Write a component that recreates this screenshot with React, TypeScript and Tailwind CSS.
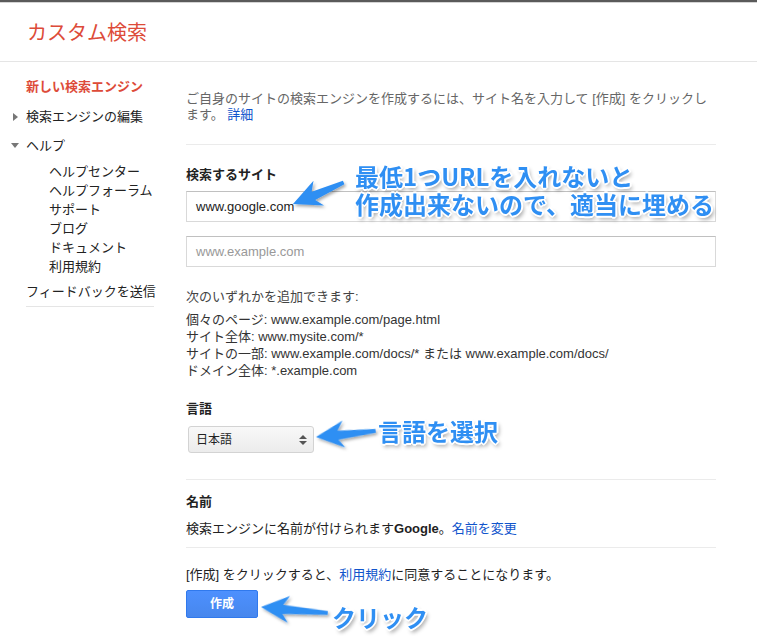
import React from "react";

function Arrow({ x, y, angle, len }: { x: number; y: number; angle: number; len: number }) {
  const d = `M0,0 L28,-13.5 L22,-4 L${len},-1.8 L${len},2 L22,5 L28,13.5 Z`;
  return (
    <g transform={`translate(${x},${y}) rotate(${angle})`}>
      <path d={d} fill="#2f8ff3" />
    </g>
  );
}

export default function App() {
  const ann =
    "absolute font-['Noto_Sans_CJK_JP',sans-serif] font-bold text-[24px] leading-[28px] text-[#2f8ff3] whitespace-nowrap [text-shadow:1px_1px_0_#fff,-1px_-1px_0_#fff,1px_-1px_0_#fff,-1px_1px_0_#fff,0_2px_0_#fff,2px_0_0_#fff,0_-2px_0_#fff,-2px_0_0_#fff,2px_3px_4px_rgba(0,0,0,0.45)]";
  return (
    <div className="relative w-[757px] h-[639px] overflow-hidden bg-white font-['Liberation_Sans','Noto_Sans_CJK_JP',sans-serif] text-[13px] text-[#222]">
      <div className="h-[2px] bg-[#5a5a5a]" />
      <div className="h-px bg-[#d4d4d4]" />
      <div className="h-[59px] flex items-center pl-[27px] border-b border-[#e5e5e5]">
        <span className="text-[20px] text-[#dd4b39] font-['Noto_Sans_CJK_JP',sans-serif]">カスタム検索</span>
      </div>
      <div className="flex">
        <div className="w-[186px] pt-[15px] leading-[19px]">
          <div className="pl-[26px] text-[#dd4b39] font-bold">新しい検索エンジン</div>
          <div className="mt-[11px] flex items-center">
            <span className="w-[26px] flex justify-center pl-[4px]">
              <span className="w-0 h-0 border-y-[4px] border-y-transparent border-l-[5px] border-l-[#777]" />
            </span>
            <span>検索エンジンの編集</span>
          </div>
          <div className="mt-[10px] flex items-center">
            <span className="w-[26px] flex justify-center pl-[4px]">
              <span className="w-0 h-0 border-x-[4px] border-x-transparent border-t-[5px] border-t-[#777]" />
            </span>
            <span>ヘルプ</span>
          </div>
          <div className="mt-[7px] pl-[49px]">
            <div>ヘルプセンター</div>
            <div>ヘルプフォーラム</div>
            <div>サポート</div>
            <div>ブログ</div>
            <div>ドキュメント</div>
            <div>利用規約</div>
          </div>
          <div className="mt-[6px] pl-[26px]">フィードバックを送信</div>
          <div className="mt-[5px] ml-[26px] w-[128px] h-px bg-[#e5e5e5]" />
        </div>
        <div className="w-[530px]">
          <div className="pt-[29px] leading-[16px] text-[#666]">
            ご自身のサイトの検索エンジンを作成するには、サイト名を入力して [作成] をクリックします。 <span className="text-[#15c]">詳細</span>
          </div>
          <div className="mt-[21px] h-px bg-[#ebebeb]" />
          <div className="mt-[20px] leading-[19px] font-bold">検索するサイト</div>
          <div className="mt-[7px] h-[31px] border border-[#d9d9d9] border-t-[#c0c0c0] flex items-center pl-[9px] text-[#222]">
            www.google.com
          </div>
          <div className="mt-[14px] h-[31px] border border-[#d9d9d9] border-t-[#c0c0c0] flex items-center pl-[9px] text-[#999]">
            www.example.com
          </div>
          <div className="mt-[20px] leading-[19px] text-[#444]">次のいずれかを追加できます:</div>
          <div className="mt-[5px] leading-[17px] text-[#333]">
            <div>個々のページ: www.example.com/page.html</div>
            <div>サイト全体: www.mysite.com/*</div>
            <div>サイトの一部: www.example.com/docs/* または www.example.com/docs/</div>
            <div>ドメイン全体: *.example.com</div>
          </div>
          <div className="mt-[20px] leading-[19px] font-bold">言語</div>
          <div className="mt-[8px] ml-[2px] w-[126px] h-[27px] rounded-[3px] border border-[#d3d3d3] bg-[linear-gradient(#f8f8f8,#ececec)] flex items-center justify-between pl-[7px] pr-[6px]">
            <span className="text-[12px] text-[#222]">日本語</span>
            <span className="flex flex-col gap-[2px]">
              <span className="w-0 h-0 border-x-[4px] border-x-transparent border-b-[4px] border-b-[#555]" />
              <span className="w-0 h-0 border-x-[4px] border-x-transparent border-t-[4px] border-t-[#555]" />
            </span>
          </div>
          <div className="mt-[26px] h-px bg-[#ebebeb]" />
          <div className="mt-[12px] leading-[19px] font-bold">名前</div>
          <div className="mt-[8px] leading-[19px]">
            検索エンジンに名前が付けられます<b>Google</b>。<span className="text-[#15c]">名前を変更</span>
          </div>
          <div className="mt-[9px] h-px bg-[#ebebeb]" />
          <div className="mt-[17px] leading-[19px]">
            [作成] をクリックすると、<span className="text-[#15c]">利用規約</span>に同意することになります。
          </div>
          <div className="mt-[6px] w-[72px] h-[28px] rounded-[2px] border border-[#3079ed] bg-[linear-gradient(#4d90fe,#4787ed)] flex items-center justify-center text-white font-bold text-[12px]">
            作成
          </div>
        </div>
      </div>

      <svg className="absolute inset-0 pointer-events-none" width="757" height="639" viewBox="0 0 757 639">
        <defs>
          <filter id="sh" x="-20%" y="-20%" width="140%" height="160%">
            <feDropShadow dx="1.5" dy="2" stdDeviation="1.5" floodColor="#000" floodOpacity="0.35" />
          </filter>
        </defs>
        <g filter="url(#sh)">
          <Arrow x={293} y={204} angle={-23} len={55} />
          <Arrow x={316} y={437} angle={-6} len={60} />
          <Arrow x={261} y={607} angle={5} len={67} />
        </g>
      </svg>

      <div className={ann} style={{ left: 355, top: 162 }}>
        最低1つURLを入れないと
        <br />
        作成出来ないので、適当に埋める
      </div>
      <div className={ann} style={{ left: 378, top: 417 }}>言語を選択</div>
      <div className={ann} style={{ left: 332, top: 603 }}>クリック</div>
    </div>
  );
}
